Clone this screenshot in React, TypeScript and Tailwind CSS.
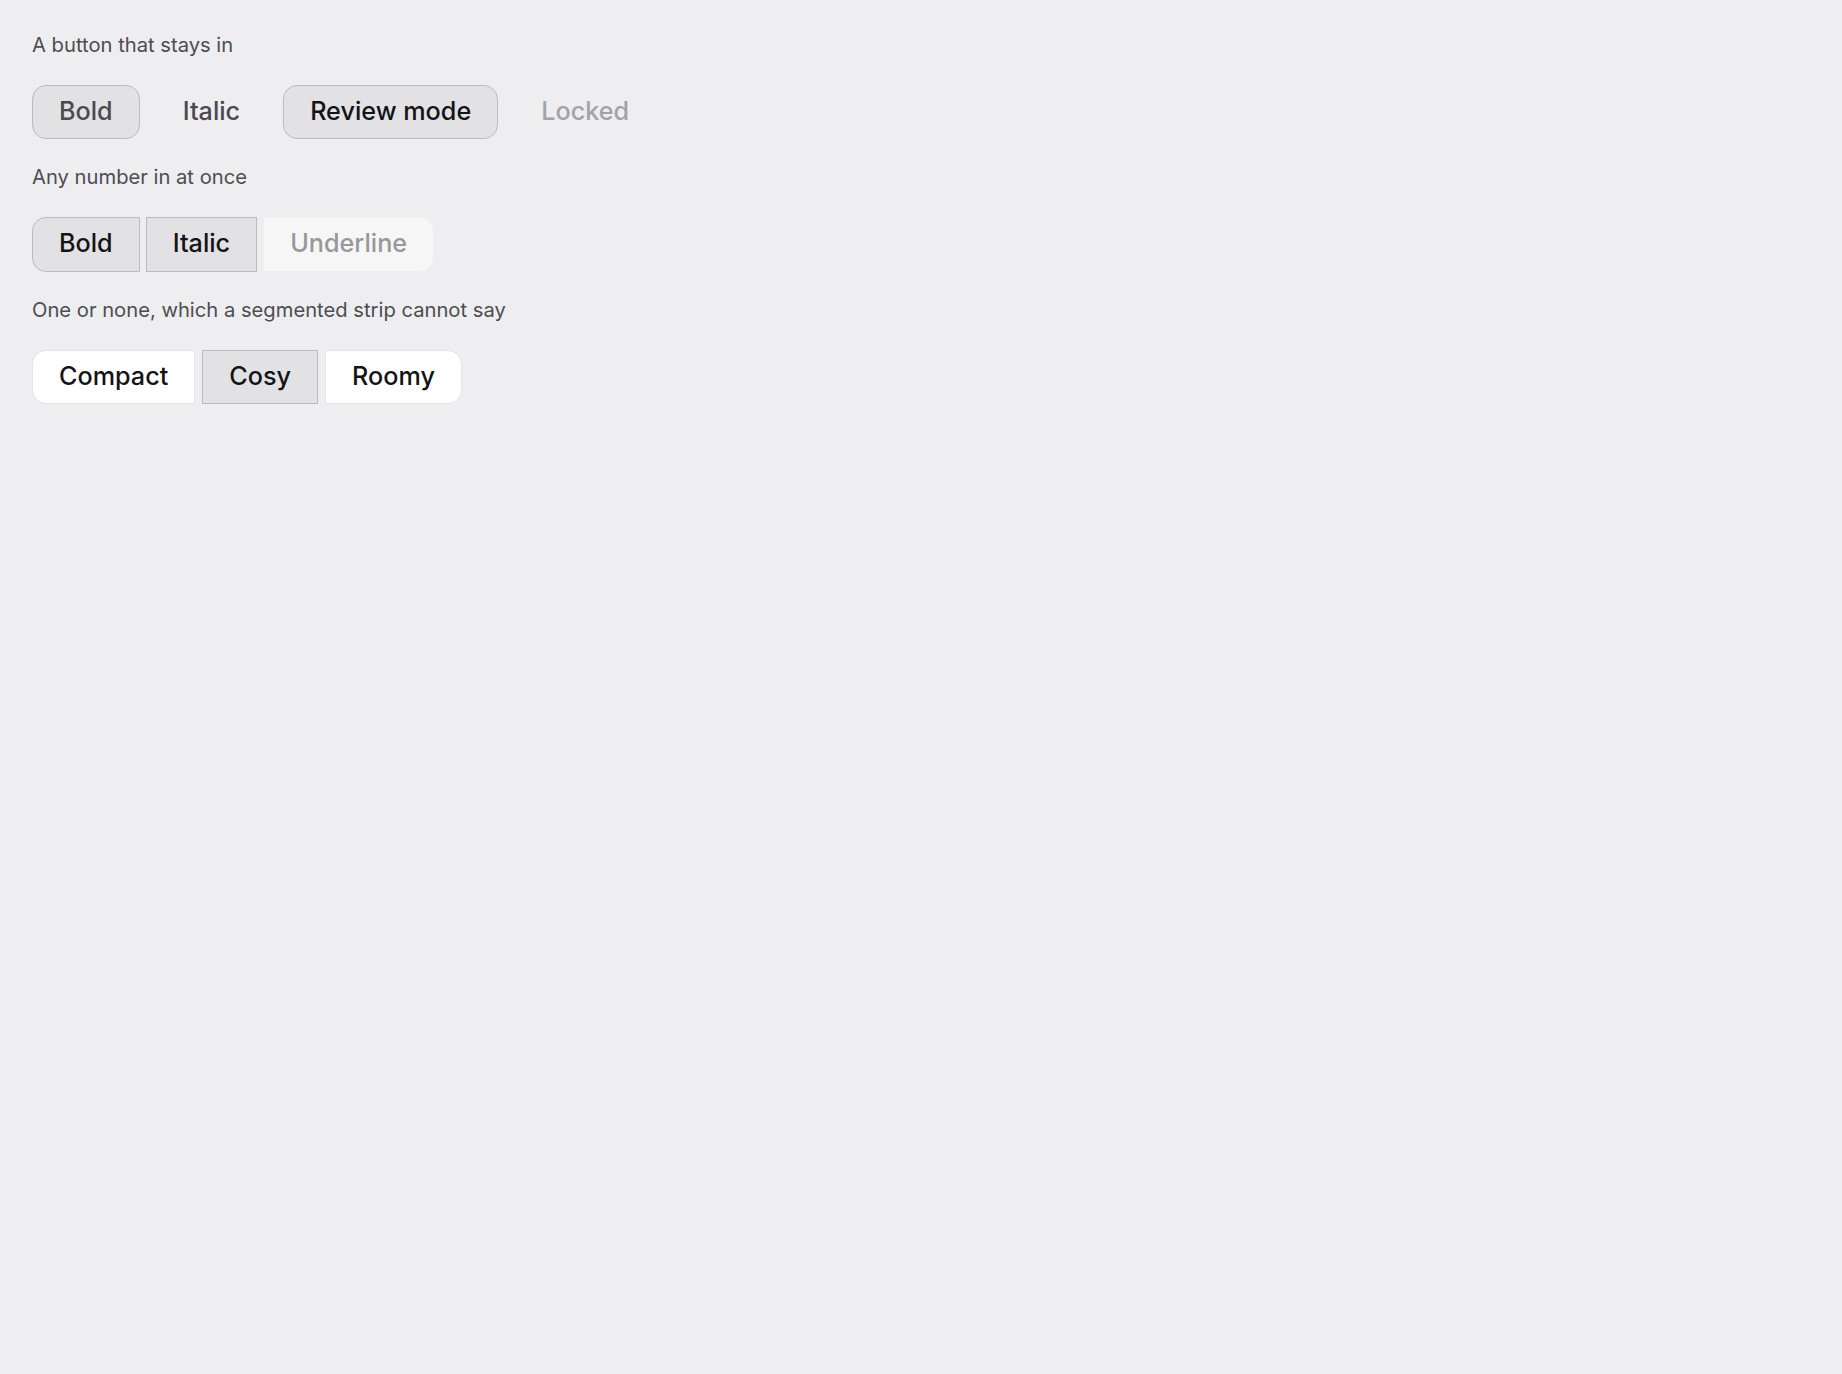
import { useState } from "react";

const font = { fontFamily: "Inter, 'Noto Sans', sans-serif" };

function Label({ children }: { children: string }) {
  return <div className="text-[20.2px] leading-[28px] text-[#4d4d52]">{children}</div>;
}

export default function App() {
  const [bold, setBold] = useState(true);
  const [italic, setItalic] = useState(false);
  const [review, setReview] = useState(true);
  const [marks, setMarks] = useState<string[]>(["Bold", "Italic"]);
  const [density, setDensity] = useState<string | null>("Cosy");

  const single = "h-[54px] px-[26px] rounded-[14px] border-[1.5px] text-[25.2px] font-medium flex items-center";
  const on = "bg-[#e2e2e5] border-[#bcbcbf]";
  const off = "bg-transparent border-transparent";

  const marksList = ["Bold", "Italic", "Underline"];
  const densities = ["Compact", "Cosy", "Roomy"];

  return (
    <div className="min-h-screen bg-[#eeeef0] pl-[32px] pt-[31px]" style={font}>
      <div className="flex flex-col gap-6">
        <div className="flex flex-col gap-[26px]">
          <Label>A button that stays in</Label>
          <div className="flex gap-4">
            <button onClick={() => setBold(!bold)} className={`${single} ${bold ? on : off} text-[#4a4a4f]`}>
              Bold
            </button>
            <button onClick={() => setItalic(!italic)} className={`${single} ${italic ? on : off} text-[#4a4a4f]`}>
              Italic
            </button>
            <button onClick={() => setReview(!review)} className={`${single} ${review ? on : off} text-[#141416]`}>
              Review mode
            </button>
            <button disabled className={`${single} ${off} text-[#a3a3a7]`}>
              Locked
            </button>
          </div>
        </div>

        <div className="flex flex-col gap-[26px]">
          <Label>Any number in at once</Label>
          <div className="flex gap-[6px]">
            {marksList.map((m, i) => {
              const active = marks.includes(m);
              const disabled = m === "Underline";
              const radius = i === 0 ? "rounded-l-[14px]" : i === marksList.length - 1 ? "rounded-r-[14px]" : "";
              return (
                <button
                  key={m}
                  disabled={disabled}
                  onClick={() => setMarks(active ? marks.filter((x) => x !== m) : [...marks, m])}
                  className={`h-[54.5px] px-[26px] border-[1.5px] text-[25.2px] font-medium flex items-center ${radius} ${
                    disabled
                      ? "bg-[#f6f6f7] border-transparent bg-clip-padding text-[#98989c]"
                      : active
                      ? "bg-[#e2e2e5] border-[#bcbcbf] text-[#141416]"
                      : "bg-white border-[#e4e4e7] text-[#141416]"
                  }`}
                >
                  {m}
                </button>
              );
            })}
          </div>
        </div>

        <div className="flex flex-col gap-[26px]">
          <Label>One or none, which a segmented strip cannot say</Label>
          <div className="flex gap-[7px]">
            {densities.map((d, i) => {
              const active = density === d;
              const radius = i === 0 ? "rounded-l-[14px]" : i === densities.length - 1 ? "rounded-r-[14px]" : "";
              return (
                <button
                  key={d}
                  onClick={() => setDensity(active ? null : d)}
                  className={`h-[54.5px] px-[26px] border-[1.5px] text-[25.2px] font-medium flex items-center text-[#141416] ${radius} ${
                    active ? "bg-[#e2e2e5] border-[#bcbcbf]" : "bg-white border-[#e4e4e7]"
                  }`}
                >
                  {d}
                </button>
              );
            })}
          </div>
        </div>
      </div>
    </div>
  );
}
